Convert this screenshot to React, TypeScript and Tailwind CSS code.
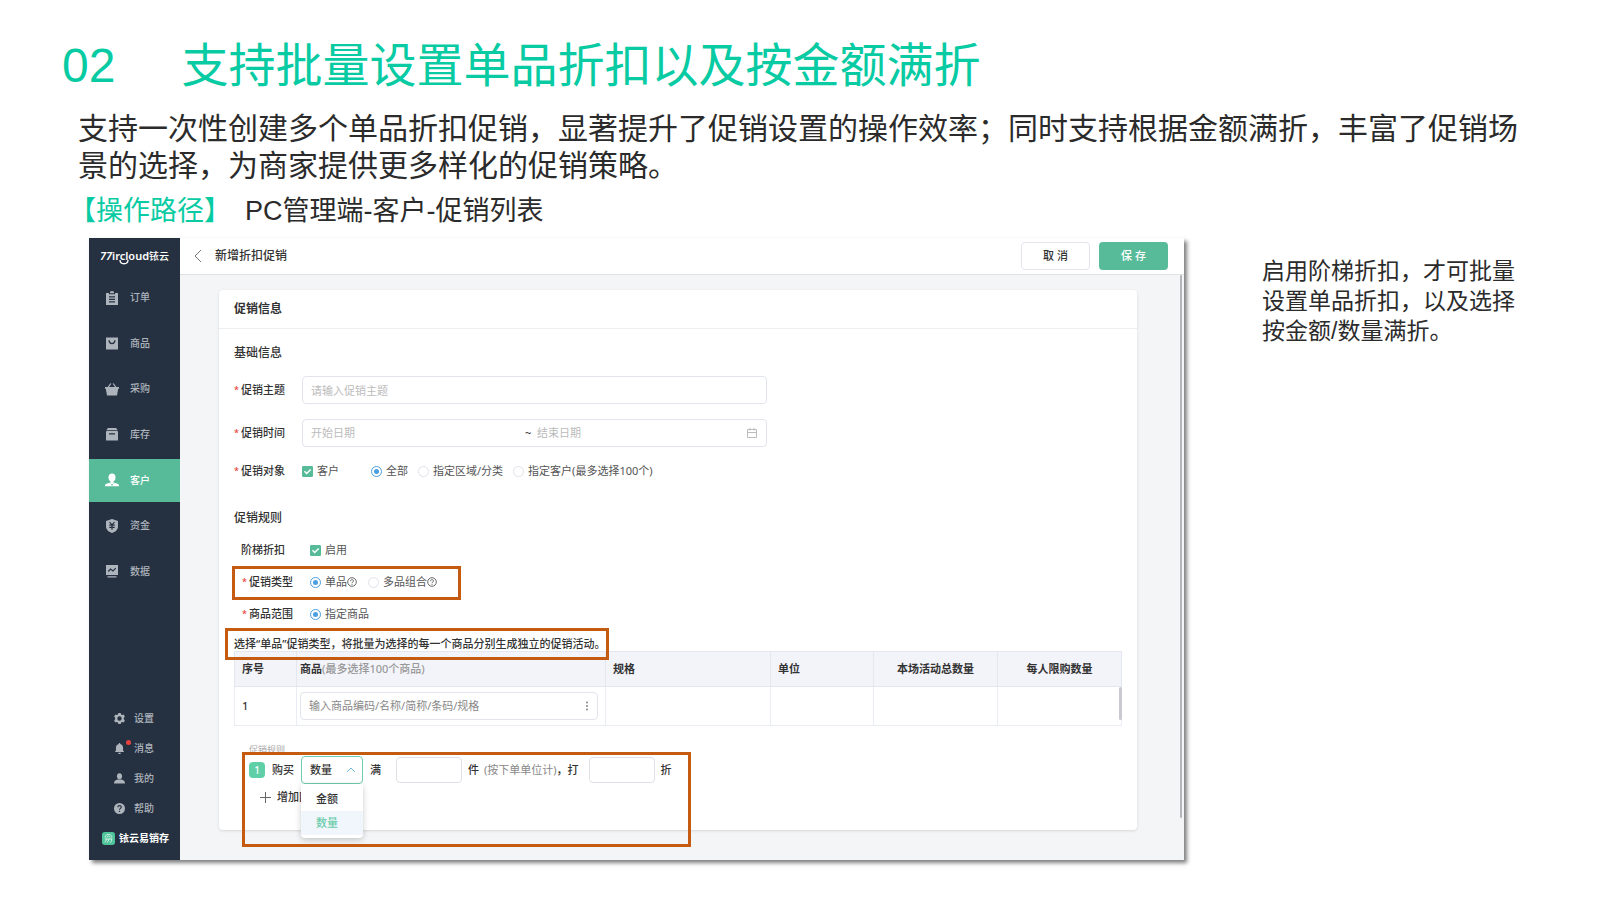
import { useState } from "react";
import type { ReactNode } from "react";

const columns = [
  { title: "序号", width: "w-[62px]", align: "text-left" },
  { title: "商品", hint: "(最多选择100个商品)", width: "w-[309px]", align: "text-left" },
  { title: "规格", width: "w-auto", align: "text-left" },
  { title: "单位", width: "w-[103px]", align: "text-left" },
  { title: "本场活动总数量", width: "w-[124px]", align: "text-center" },
  { title: "每人限购数量", width: "w-[124px]", align: "text-center" },
];

const mainMenu: { name: string; icon: ReactNode }[] = [
  {
    name: "订单",
    icon: (
      <path
        fillRule="evenodd"
        d="M1 2h3v1.200h6V2h3v12H1zM5 .5h1.300V0h1.400v.5H9v1.700H5zM4 5.300v1.200h6V5.300zM4 7.800V9h6V7.800zM4 10.300v1.200h6v-1.200z"
      />
    ),
  },
  {
    name: "商品",
    icon: (
      <>
        <path d="M1 1.500h12V13.500H1z" />
        <path d="M4 4.200c.5 4.500 5.500 4.500 6 0" fill="none" stroke="#253141" strokeWidth="1.300" />
      </>
    ),
  },
  {
    name: "采购",
    icon: (
      <>
        <path d="M0 5h14v1.800h-.8L12 13.500H2L.8 6.800H0z" />
        <path d="M3 5.500 5.800 1.500M11 5.500 8.200 1.500" fill="none" stroke="currentColor" strokeWidth="1.300" />
      </>
    ),
  },
  {
    name: "库存",
    icon: (
      <>
        <path d="M3 1h8l1.800 2.300H1.200z" />
        <path fillRule="evenodd" d="M2 4h10a1 1 0 011 1v8.500H1V5a1 1 0 011-1zM4 6.300v1.300h6V6.300z" />
      </>
    ),
  },
  {
    name: "客户",
    icon: (
      <>
        <ellipse cx="7" cy="4.400" rx="3.500" ry="4" />
        <path d="M5.500 8h3v1.500l4 1.300c1 .4 1.500 1 1.500 2.400H0c0-1.400.5-2 1.500-2.400l4-1.300z" />
        <path d="M5.500 10.500 7 12l1.500-1.500M7 12v1.200" fill="none" stroke="#57bb9a" strokeWidth="0.700" />
      </>
    ),
  },
  {
    name: "资金",
    icon: (
      <>
        <path d="M7 0l6 2v5.500C13 11 10 13 7 14 4 13 1 11 1 7.500V2z" />
        <path
          d="M4.500 3.200 7 5.800l2.500-2.600M4.300 6.200h5.400M4.300 8.400h5.400M7 5.800v5"
          fill="none"
          stroke="#253141"
          strokeWidth="1.200"
        />
      </>
    ),
  },
  {
    name: "数据",
    icon: (
      <>
        <path d="M1 1h12v10H1zM2.500 12.300h9v1.200h-9z" />
        <path d="M3.300 7.500 5.500 5l2.500 2 2.700-2.800" fill="none" stroke="#253141" strokeWidth="1.200" />
      </>
    ),
  },
];

const subMenu: { name: string; icon: ReactNode; dot?: boolean }[] = [
  {
    name: "设置",
    icon: (
      <path
        fillRule="evenodd"
        d="M5.500 0h3l.5 1.800 1.500.8 1.800-.6 1.500 2.600L12.500 6v2l1.300 1.400-1.500 2.600-1.800-.6-1.500.8-.5 1.800h-3L5 12.200l-1.500-.8-1.800.6L.2 9.400 1.500 8V6L.2 4.600 1.700 2l1.800.6L5 1.800zM7 4.200a2.800 2.800 0 100 5.600 2.800 2.800 0 000-5.600z"
      />
    ),
  },
  {
    name: "消息",
    dot: true,
    icon: <path d="M6.200 0h1.600v1.300C10 1.700 11.500 3.500 11.500 6v3.500l1.500 2H1l1.500-2V6c0-2.500 1.500-4.300 3.700-4.700zM5 12.300h4L8 14H6z" />,
  },
  {
    name: "我的",
    icon: (
      <>
        <ellipse cx="7" cy="4" rx="3.200" ry="3.800" />
        <path d="M0 13.500c0-3.500 2-4.500 4.500-5.200h5C12 9 14 10 14 13.500z" />
      </>
    ),
  },
  {
    name: "帮助",
    icon: (
      <>
        <circle cx="7" cy="7" r="7" />
        <path
          d="M4.800 5.500C4.800 2.500 9.300 2.600 9.200 5.300 9.200 6.800 7 6.900 7 8.600M7 9.800v1.500"
          fill="none"
          stroke="#253141"
          strokeWidth="1.500"
        />
      </>
    ),
  },
];

function Sidebar() {
  const [active, setActive] = useState("客户");
  return (
    <aside className="flex w-[91px] shrink-0 flex-col bg-[#253141] text-[#aeb4bc]">
      <div className="relative flex h-9 items-center justify-center text-white">
        <span className="text-[11px] font-semibold italic">77</span>
        <span className="text-[11px] font-semibold">ircloud</span>
        <span className="text-[10px] font-medium">铱云</span>
        <svg viewBox="0 0 10 5" className="absolute top-[22px] left-[30px] h-[5px] w-[10px]" fill="none" stroke="currentColor" strokeWidth="1.300">
          <path d="M1 0c0 5 8 5 8 0" />
        </svg>
      </div>
      <nav className="mt-0.5 flex h-[317px] flex-col justify-between">
        {mainMenu.map((m) => (
          <button
            key={m.name}
            onClick={() => setActive(m.name)}
            className={
              active === m.name
                ? "flex h-[43px] items-center gap-[11px] bg-[#57bb9a] pl-4 text-[10px] font-medium text-white"
                : "flex h-[43px] items-center gap-[11px] pl-4 text-[10px] font-medium"
            }
          >
            <svg viewBox="0 0 14 14" className="size-3.5" fill="currentColor">
              {m.icon}
            </svg>
            {m.name}
          </button>
        ))}
      </nav>
      <div className="mt-auto flex flex-col pb-[7px]">
        {subMenu.map((m) => (
          <button key={m.name} className="relative flex h-[30px] items-center gap-[9px] pl-[25px] text-[10px] font-medium">
            <svg viewBox="0 0 14 14" className="size-[11px]" fill="currentColor">
              {m.icon}
            </svg>
            {m.name}
            {m.dot && <span className="absolute top-[7px] left-[37px] size-[5px] rounded-full bg-[#e8403c]" />}
          </button>
        ))}
        <div className="flex h-[30px] items-center gap-1 pl-[13px] text-[10px] font-bold text-white">
          <svg viewBox="0 0 14 14" className="size-[13px]" fill="none" stroke="#d9f5e9">
            <rect width="14" height="14" rx="3" fill="#4fc39a" stroke="none" />
            <path d="M3.500 6c-1-4.500 8-4.500 7 0M5.300 6c0-2 3.400-2 3.400 0M3 7.500h8M5.500 7.500 3 11M8 7.500 5.500 11.500M10.500 7.500c0 2-.5 3.500-2 4" />
          </svg>
          铱云易销存
        </div>
      </div>
    </aside>
  );
}

interface ChoiceProps {
  type: "checkbox" | "radio";
  name: string;
  label: string;
  checked?: boolean;
  help?: boolean;
}

function Choice({ type, name, label, checked, help }: ChoiceProps) {
  return (
    <label className="flex items-center text-[#555]">
      <span className="relative mr-1 flex">
        <input
          type={type}
          name={name}
          defaultChecked={checked}
          className={
            type === "radio"
              ? "peer size-[11px] appearance-none rounded-full border border-[#dfe2ea] bg-white checked:border-[#4a9fe0]"
              : "peer size-[11px] appearance-none rounded-[1px] border border-[#dfe2ea] bg-white checked:border-[#57bb9a] checked:bg-[#57bb9a]"
          }
        />
        {type === "radio" ? (
          <span className="pointer-events-none absolute inset-[3px] hidden rounded-full bg-[#4a9fe0] peer-checked:block" />
        ) : (
          <svg
            viewBox="0 0 11 11"
            className="pointer-events-none absolute inset-0 hidden size-[11px] peer-checked:block"
            fill="none"
            stroke="white"
            strokeWidth="1.500"
          >
            <path d="M2.500 5.200 4.700 7.500 8.700 3.500" />
          </svg>
        )}
      </span>
      {label}
      {help && (
        <svg viewBox="0 0 10 10" className="size-2.5" fill="none" stroke="currentColor" strokeWidth="0.900">
          <circle cx="5" cy="5" r="4.300" />
          <path d="M3.500 4.200c0-2 3-2 3-.2C6.500 5 5 5 5 6.200M5 6.900v.9" />
        </svg>
      )}
    </label>
  );
}

function Label({ text, required, htmlFor }: { text: string; required?: boolean; htmlFor?: string }) {
  return (
    <label htmlFor={htmlFor} className="flex shrink-0 items-center font-medium text-[#333]">
      <span className="w-[7px] text-[9px] text-[#e8403c]">{required ? "*" : ""}</span>
      {text}
    </label>
  );
}

function GoodsTable() {
  return (
    <div className="relative">
      <table className="w-full table-fixed border-collapse border border-[#e8eaf1]">
        <thead>
          <tr className="h-[35px] bg-[#f3f4fa]">
            {columns.map((c) => (
              <th key={c.title} className={`${c.width} ${c.align} border border-[#e4e7ef] px-[7px] font-bold text-[#333] nth-2:px-[3px]`}>
                {c.title}
                {c.hint && <span className="font-medium text-[#999]">{c.hint}</span>}
              </th>
            ))}
          </tr>
        </thead>
        <tbody>
          <tr className="h-[39px]">
            <td className="border border-[#eaecf3] px-[7px] font-medium text-[#333]">1</td>
            <td className="border border-[#eaecf3] py-0 pr-[7px] pl-[3px]">
              <div className="flex h-7 items-center rounded-sm border border-[#e2e5ee] px-2">
                <input
                  aria-label="商品"
                  placeholder="输入商品编码/名称/简称/条码/规格"
                  className="min-w-0 flex-1 outline-none placeholder:text-[#888]"
                />
                <svg viewBox="0 0 4 10" className="h-2.5 w-1" fill="#777">
                  <circle cx="2" cy="1.500" r="0.900" />
                  <circle cx="2" cy="5" r="0.900" />
                  <circle cx="2" cy="8.500" r="0.900" />
                </svg>
              </div>
            </td>
            <td className="border border-[#eaecf3]" />
            <td className="border border-[#eaecf3]" />
            <td className="border border-[#eaecf3]" />
            <td className="border border-[#eaecf3]" />
          </tr>
        </tbody>
      </table>
      <div className="absolute right-0 bottom-1.5 h-[33px] w-[3px] rounded bg-[#c8c9d1]" />
    </div>
  );
}

function RuleEditor() {
  const [unit, setUnit] = useState("数量");
  return (
    <div className="relative mt-[18px] ml-2 w-[449px] font-medium text-[#333]">
      <div className="pl-[7px] text-[9px] leading-[12px] font-normal text-[#aaa]">促销规则</div>
      <div className="flex h-7 items-center pl-[7px]">
        <span className="flex size-4 items-center justify-center rounded-sm bg-[#5fcfa8] text-[10px] text-white">1</span>
        <span className="ml-[7px]">购买</span>
        <div className="relative ml-[7px] w-[62px]">
          <select
            aria-label="购买方式"
            value={unit}
            onChange={(e) => setUnit(e.target.value)}
            className="block h-7 w-full appearance-none rounded-sm border border-[#6fcbad] bg-white px-2"
          >
            <option>金额</option>
            <option>数量</option>
          </select>
          <svg viewBox="0 0 10 6" className="pointer-events-none absolute top-[11px] right-[7px] h-1.5 w-2.5" fill="none" stroke="#6fb7e0">
            <path d="M1 5l4-4 4 4" />
          </svg>
          <ul className="absolute top-7 left-0 z-10 h-[54px] w-full rounded-b-sm bg-white pt-[3px] shadow-[0_2px_6px_rgba(0,0,0,0.2)]">
            {["金额", "数量"].map((o) => (
              <li
                key={o}
                onClick={() => setUnit(o)}
                className={
                  o === unit
                    ? "h-6 bg-[#f1f6fd] pl-[15px] leading-6 text-[#6accaa]"
                    : "h-6 pl-[15px] leading-6"
                }
              >
                {o}
              </li>
            ))}
          </ul>
        </div>
        <label htmlFor="full" className="ml-[7px]">满</label>
        <input id="full" className="ml-[15px] h-[26px] w-[66px] rounded-sm border border-[#dfe1e6]" />
        <span className="ml-1.5">件</span>
        <span className="ml-[5px] font-normal text-[#888]">(按下单单位计)</span>
        <label htmlFor="off">，打</label>
        <input id="off" className="ml-2.5 h-[26px] w-[66px] rounded-sm border border-[#dfe1e6]" />
        <span className="ml-1.5">折</span>
      </div>
      <button className="mt-[5px] flex w-[61px] items-center gap-1.5 overflow-hidden pl-[18px] whitespace-nowrap">
        <svg viewBox="0 0 11 11" className="size-[11px] shrink-0" fill="none" stroke="#666">
          <path d="M5.500 0v11M0 5.500h11" />
        </svg>
        <span className="min-w-0 flex-1 overflow-hidden text-left">增加区间</span>
      </button>
      <div className="pointer-events-none absolute top-2 left-0 z-20 h-[95px] w-full border-3 border-[#c55a11]" />
    </div>
  );
}

function PromotionForm() {
  return (
    <section className="mr-[47px] ml-[39px] mt-[15px] h-[540px] rounded-sm bg-white text-[11px] leading-[16px] shadow-[0_1px_3px_rgba(0,0,0,0.12)]">
      <h2 className="flex h-[39px] items-center border-b border-[#eceef2] px-[15px] text-xs font-bold text-[#333]">促销信息</h2>
      <div className="px-[15px]">
        <h3 className="mt-4 text-xs font-medium text-[#333]">基础信息</h3>
        <div className="mt-[15px] flex items-center">
          <Label text="促销主题" required htmlFor="subject" />
          <input
            id="subject"
            placeholder="请输入促销主题"
            className="ml-[17px] h-7 w-[465px] rounded-sm border border-[#e2e5ee] px-2 outline-none placeholder:text-[#bbb]"
          />
        </div>
        <div className="mt-[15px] flex items-center">
          <Label text="促销时间" required htmlFor="start" />
          <div className="ml-[17px] flex h-7 w-[465px] items-center rounded-sm border border-[#e2e5ee] px-2">
            <input id="start" placeholder="开始日期" className="w-[214px] outline-none placeholder:text-[#bbb]" />
            <span className="w-3 text-[#333]">~</span>
            <input aria-label="结束日期" placeholder="结束日期" className="min-w-0 flex-1 outline-none placeholder:text-[#bbb]" />
            <svg viewBox="0 0 12 12" className="size-3" fill="none" stroke="#bbb">
              <path d="M1.500 2.500h9v8h-9zM1.500 5.500h9M4 1v2.500M8 1v2.500" />
            </svg>
          </div>
        </div>
        <div className="mt-4 flex items-center">
          <Label text="促销对象" required />
          <div className="ml-[17px] flex items-center">
            <Choice type="checkbox" name="customer" label="客户" checked />
            <div className="ml-8 flex gap-2.5">
              <Choice type="radio" name="target" label="全部" checked />
              <Choice type="radio" name="target" label="指定区域/分类" />
              <Choice type="radio" name="target" label="指定客户(最多选择100个)" />
            </div>
          </div>
        </div>

        <h3 className="mt-[31px] text-xs font-medium text-[#333]">促销规则</h3>
        <div className="mt-4 flex items-center">
          <Label text="阶梯折扣" />
          <div className="ml-[25px]">
            <Choice type="checkbox" name="ladder" label="启用" checked />
          </div>
        </div>
        <div className="relative mt-4 flex items-center pl-2">
          <Label text="促销类型" required />
          <div className="ml-[17px] flex gap-[11px]">
            <Choice type="radio" name="kind" label="单品" help checked />
            <Choice type="radio" name="kind" label="多品组合" help />
          </div>
          <div className="pointer-events-none absolute -top-2 -left-0.5 h-[34px] w-[229px] border-3 border-[#c55a11]" />
        </div>
        <div className="mt-4 flex items-center pl-2">
          <Label text="商品范围" required />
          <div className="ml-[17px]">
            <Choice type="radio" name="range" label="指定商品" checked />
          </div>
        </div>
        <div className="relative mt-[14px] mb-[-1px] flex">
          <p className="font-medium whitespace-nowrap text-[#333]">选择“单品”促销类型，将批量为选择的每一个商品分别生成独立的促销活动。</p>
          <div className="pointer-events-none absolute -top-2 -left-[9px] z-10 h-8 w-[384px] border-3 border-[#c55a11]" />
        </div>
        <GoodsTable />
        <RuleEditor />
      </div>
    </section>
  );
}

export default function App() {
  return (
    <main className="min-h-screen bg-white font-['Liberation_Sans','Noto_Sans_CJK_SC',sans-serif] text-[#2b2b2b]">
      <h1 className="flex gap-[66px] pt-8 pl-[62px] text-[47px] leading-[68px] text-[#08cba3]">
        <span className="text-[48px]">02</span>
        <span>支持批量设置单品折扣以及按金额满折</span>
      </h1>
      <p className="mt-2.5 mr-[70px] ml-[78px] text-[30px] leading-[37px]">
        支持一次性创建多个单品折扣促销，显著提升了促销设置的操作效率；同时支持根据金额满折，丰富了促销场景的选择，为商家提供更多样化的促销策略。
      </p>
      <div className="mt-[5px] flex gap-[14px] pl-[69px] text-[27px] leading-[44px]">
        <span className="text-[#08cba3]">【操作路径】</span>
        <span>PC管理端-客户-促销列表</span>
      </div>
      <div className="flex items-start gap-[78px] pt-[5px] pr-[74px] pl-[89px]">
        <div className="flex h-[622px] min-w-0 flex-1 bg-[#f4f5f7] font-['Noto_Sans','Noto_Sans_CJK_SC',sans-serif] shadow-[3px_3px_4px_rgba(0,0,0,0.5)]">
          <Sidebar />
          <div className="relative min-w-0 flex-1">
            <header className="flex h-[37px] items-center border-b border-[#e0e1e3] bg-white pr-4 pl-[14px]">
              <button aria-label="返回">
                <svg viewBox="0 0 8 14" className="h-[14px] w-2" fill="none" stroke="#777">
                  <path d="M7 1 1 7l6 6" />
                </svg>
              </button>
              <span className="ml-[13px] text-xs font-medium text-[#333]">新增折扣促销</span>
              <div className="ml-auto flex gap-[9px] text-[11px] font-medium">
                <button className="h-7 w-[69px] rounded-sm border border-[#e2e5ee] text-[#333]">取 消</button>
                <button className="h-7 w-[69px] rounded-sm bg-[#57bb9a] text-white">保 存</button>
              </div>
            </header>
            <PromotionForm />
            <div className="absolute top-[37px] right-0.5 h-[543px] w-[2px] rounded bg-[#b4b6ba]" />
          </div>
        </div>
        <p className="w-[264px] pt-[18px] text-[23px] leading-[30px]">
          启用阶梯折扣，才可批量设置单品折扣，以及选择按金额/数量满折。
        </p>
      </div>
    </main>
  );
}
